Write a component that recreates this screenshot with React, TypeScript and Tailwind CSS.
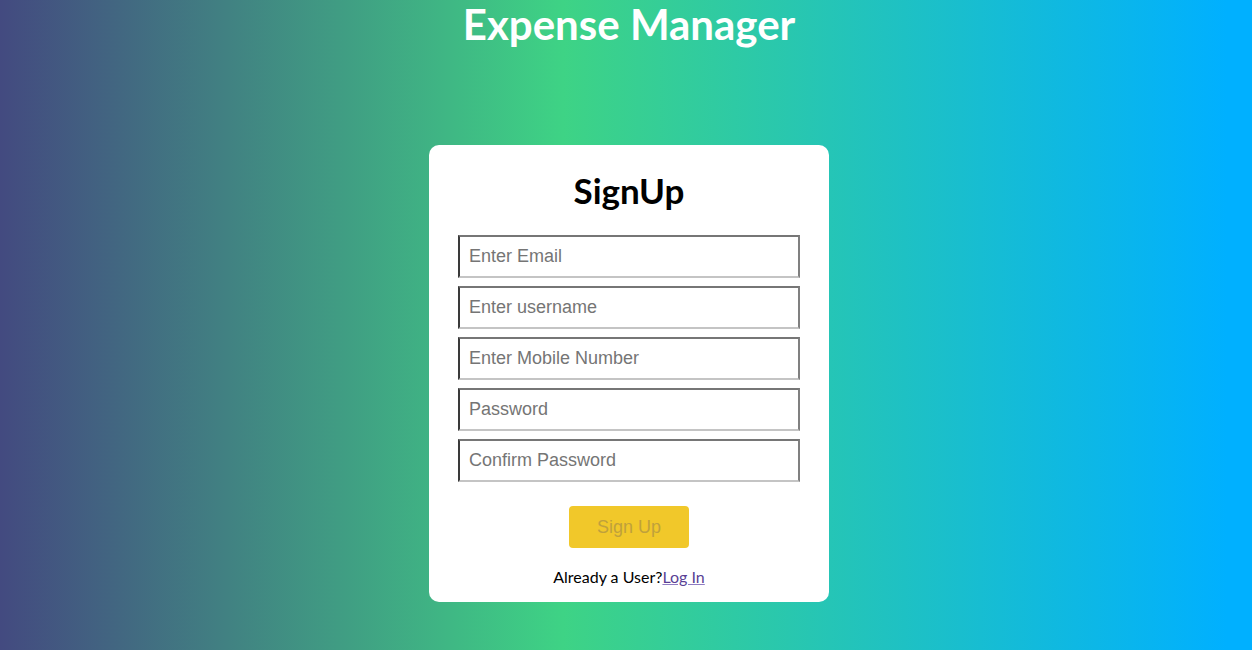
import React from 'react';

const fields = ['Enter Email', 'Enter username', 'Enter Mobile Number', 'Password', 'Confirm Password'];

export default function App() {
  return (
    <div className="min-h-screen w-full bg-[linear-gradient(to_right,#434a80_0%,#3ed385_45%,#00b0ff_98%)] pl-[6px] font-['Lato','Noto_Sans',sans-serif]">
      <h1 className="text-center text-[42px] leading-[48px] font-bold text-white">Expense Manager</h1>

      <div className="mx-auto mt-[97px] flex w-[400px] flex-col items-center rounded-[10px] bg-white px-[29px] pt-[25px] pb-[13px]">
        <h2 className="text-[35px] leading-[40px] font-bold text-black">SignUp</h2>

        <form className="mt-[25px] flex w-full flex-col items-center" onSubmit={(e) => e.preventDefault()}>
          <div className="flex w-full flex-col gap-2">
            {fields.map((f) => (
              <input
                key={f}
                type={f.includes('Password') ? 'password' : 'text'}
                placeholder={f}
                className="h-[43px] w-full border-2 border-[#808080] border-t-[#767676] border-l-[#3a3a3a] border-b-[#c4c4c4] bg-white pl-[9px] font-['Liberation_Sans',Arial,sans-serif] text-[18px] text-black outline-none placeholder:text-[#757575]"
              />
            ))}
          </div>

          <button
            type="submit"
            className="mt-6 h-[42px] w-[120px] rounded-[4px] bg-[#f1c82a] font-['Liberation_Sans',Arial,sans-serif] text-[18px] text-[#bfa13c]"
          >
            Sign Up
          </button>

          <p className="mt-[17px] text-[16px] leading-6 text-black">
            Already a User?<a href="#" className="text-[#5a3f95] underline decoration-[#8f7cc2]">Log In</a>
          </p>
        </form>
      </div>
    </div>
  );
}
